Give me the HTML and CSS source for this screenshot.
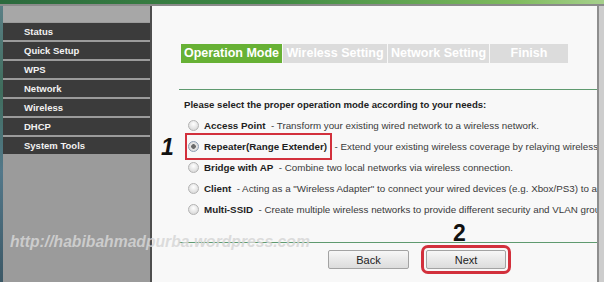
FILE: index.html
```html
<!DOCTYPE html>
<html lang="en">
<head>
  <meta charset="UTF-8">
  <meta name="viewport" content="width=device-width, initial-scale=1.0">
  <title>Quick Setup - Operation Mode</title>
  <link rel="stylesheet" href="styles.css">
</head>
<body>
  <div class="screen">
    <div class="topbar"></div>
    <div class="frame">
      <div class="desktop-edge"></div>

      <div class="sidebar">
        <ul class="menu">
          <li>Status</li>
          <li>Quick Setup</li>
          <li>WPS</li>
          <li>Network</li>
          <li>Wireless</li>
          <li>DHCP</li>
          <li>System Tools</li>
        </ul>
      </div>

      <div class="content">
        <div class="steps">
          <span class="step step-1 active">Operation Mode</span>
          <span class="step step-2">Wireless Setting</span>
          <span class="step step-3">Network Setting</span>
          <span class="step step-4">Finish</span>
        </div>

        <div class="rule"></div>

        <p class="intro">Please select the proper operation mode according to your needs:</p>

        <div class="modes">
          <div class="mode">
            <label class="choice"><span class="radio"></span><b>Access Point</b></label>
            <span class="desc">&nbsp; - Transform your existing wired network to a wireless network.</span>
          </div>
          <div class="mode">
            <label class="choice marked"><span class="radio checked"></span><b>Repeater(Range Extender)</b><span class="note note-1">1</span></label>
            <span class="desc">&nbsp; - Extend your existing wireless coverage by relaying wireless</span>
          </div>
          <div class="mode">
            <label class="choice"><span class="radio"></span><b>Bridge with AP</b></label>
            <span class="desc">&nbsp; - Combine two local networks via wireless connection.</span>
          </div>
          <div class="mode">
            <label class="choice"><span class="radio"></span><b>Client</b></label>
            <span class="desc">&nbsp; - Acting as a "Wireless Adapter" to connect your wired devices (e.g. Xbox/PS3) to a wireless network.</span>
          </div>
          <div class="mode">
            <label class="choice"><span class="radio"></span><b>Multi-SSID</b></label>
            <span class="desc">&nbsp; - Create multiple wireless networks to provide different security and VLAN groups.</span>
          </div>
        </div>

        <div class="rule rule-bottom"></div>

        <div class="actions">
          <button class="button" type="button">Back</button>
          <button class="button marked" type="button">Next<span class="note note-2">2</span></button>
        </div>
      </div>

      <div class="scroll-edge"></div>
    </div>

    <div class="watermark">http://habibahmadpurba.wordpress.com</div>
  </div>
</body>
</html>
```

FILE: styles.css
```css
body {
  margin: 0;
  font-family: "Liberation Sans", Arial, sans-serif;
  background-color: #4d6b74;
}

.screen {
  position: relative;
  width: 604px;
  height: 282px;
  overflow: hidden;
  display: flex;
  flex-direction: column;
}

.topbar {
  height: 4px;
  background: linear-gradient(to right, #2c6a3e, #3f8a44 45%, #7fbb5e 85%, #a6d08c);
  border-bottom: 2px solid #8b8b8b;
  flex-shrink: 0;
}

.frame {
  flex: 1;
  display: flex;
  min-height: 0;
}

.desktop-edge {
  width: 3px;
  background: linear-gradient(to bottom, #5a7f86, #3f6d5c 30%, #53788a 60%, #3c5866);
}

/* left menu */
.sidebar {
  width: 147px;
  background-color: #9b9b9b;
  border-right: 2px solid #4f4f4f;
  padding-top: 17px;
  background-image: linear-gradient(to bottom, #a7a7a7 0, #a7a7a7 16px, #9b9b9b 16px);
}

.menu {
  list-style: none;
  margin: 0;
  padding: 0;
}

.menu li {
  height: 17px;
  line-height: 17px;
  margin-bottom: 2px;
  padding-left: 21px;
  background-color: #3b3b3b;
  color: #f2f2f2;
  font-size: 9.5px;
  font-weight: bold;
}

/* main panel */
.content {
  flex: 1;
  min-width: 0;
  background-color: #f8f8f8;
  padding: 38px 0 0 27px;
  overflow: hidden;
  white-space: nowrap;
  color: #2b2b2b;
}

.steps {
  display: flex;
  gap: 1px;
  margin-left: 2px;
}

.step {
  height: 19px;
  line-height: 19px;
  text-align: center;
  background-color: #dcdcdc;
  color: #ffffff;
  font-size: 12.5px;
  font-weight: bold;
}

.step.active {
  background-color: #67b135;
}

.step-1 { width: 101px; }
.step-2 { width: 104px; }
.step-3 { width: 101px; }
.step-4 { width: 78px; }

.rule {
  height: 1px;
  margin-top: 26px;
  background-color: #5f9a6f;
}

.rule-bottom {
  margin-top: 22px;
}

.intro {
  margin: 4px 0 0 5px;
  line-height: 21px;
  font-size: 9.6px;
  font-weight: bold;
  color: #222;
}

.modes {
  margin-left: 9px;
}

.mode {
  display: flex;
  align-items: center;
  height: 21px;
  font-size: 9.8px;
}

.choice {
  position: relative;
  display: flex;
  align-items: center;
  height: 21px;
  color: #1e1e1e;
}

.choice.marked {
  outline: 2px solid #d2303c;
  outline-offset: 1px;
  padding-right: 2px;
}

.radio {
  width: 9px;
  height: 9px;
  border-radius: 50%;
  border: 1px solid #b3b3b3;
  background: radial-gradient(circle at 50% 35%, #ffffff, #dedede 70%, #cfcfcf);
  margin-right: 5px;
  box-sizing: content-box;
}

.radio.checked {
  background: radial-gradient(circle, #6a6a6a 0, #6a6a6a 2px, #e6e6e6 2.6px, #d2d2d2);
  border-color: #8d9db3;
}

.desc {
  color: #3a3a3a;
}

.note {
  position: absolute;
  font-size: 23px;
  font-weight: bold;
  color: #111;
  line-height: 1;
}

.note-1 {
  left: -27px;
  top: 0;
  font-style: italic;
}

.note-2 {
  left: 26px;
  top: -29px;
}

.actions {
  display: flex;
  gap: 17px;
  margin: 7px 0 0 149px;
}

.button {
  position: relative;
  height: 19px;
  padding: 0;
  font-family: "Liberation Sans", Arial, sans-serif;
  font-size: 11px;
  color: #222;
  border: 1px solid #a3a3a3;
  border-radius: 2px;
  background: linear-gradient(to bottom, #f7f7f7, #e9e9e9 50%, #dcdcdc);
  width: 81px;
}

.button.marked {
  width: 80px;
  outline: 3px solid #d2303c;
  outline-offset: 2px;
}

.scroll-edge {
  width: 5px;
  border-left: 2px solid #8e8e8e;
  background-color: #cdcdcd;
}

.watermark {
  position: absolute;
  left: 10px;
  top: 233px;
  font-size: 15.7px;
  font-weight: bold;
  font-style: italic;
  color: rgba(214, 214, 214, 0.85);
}
```
